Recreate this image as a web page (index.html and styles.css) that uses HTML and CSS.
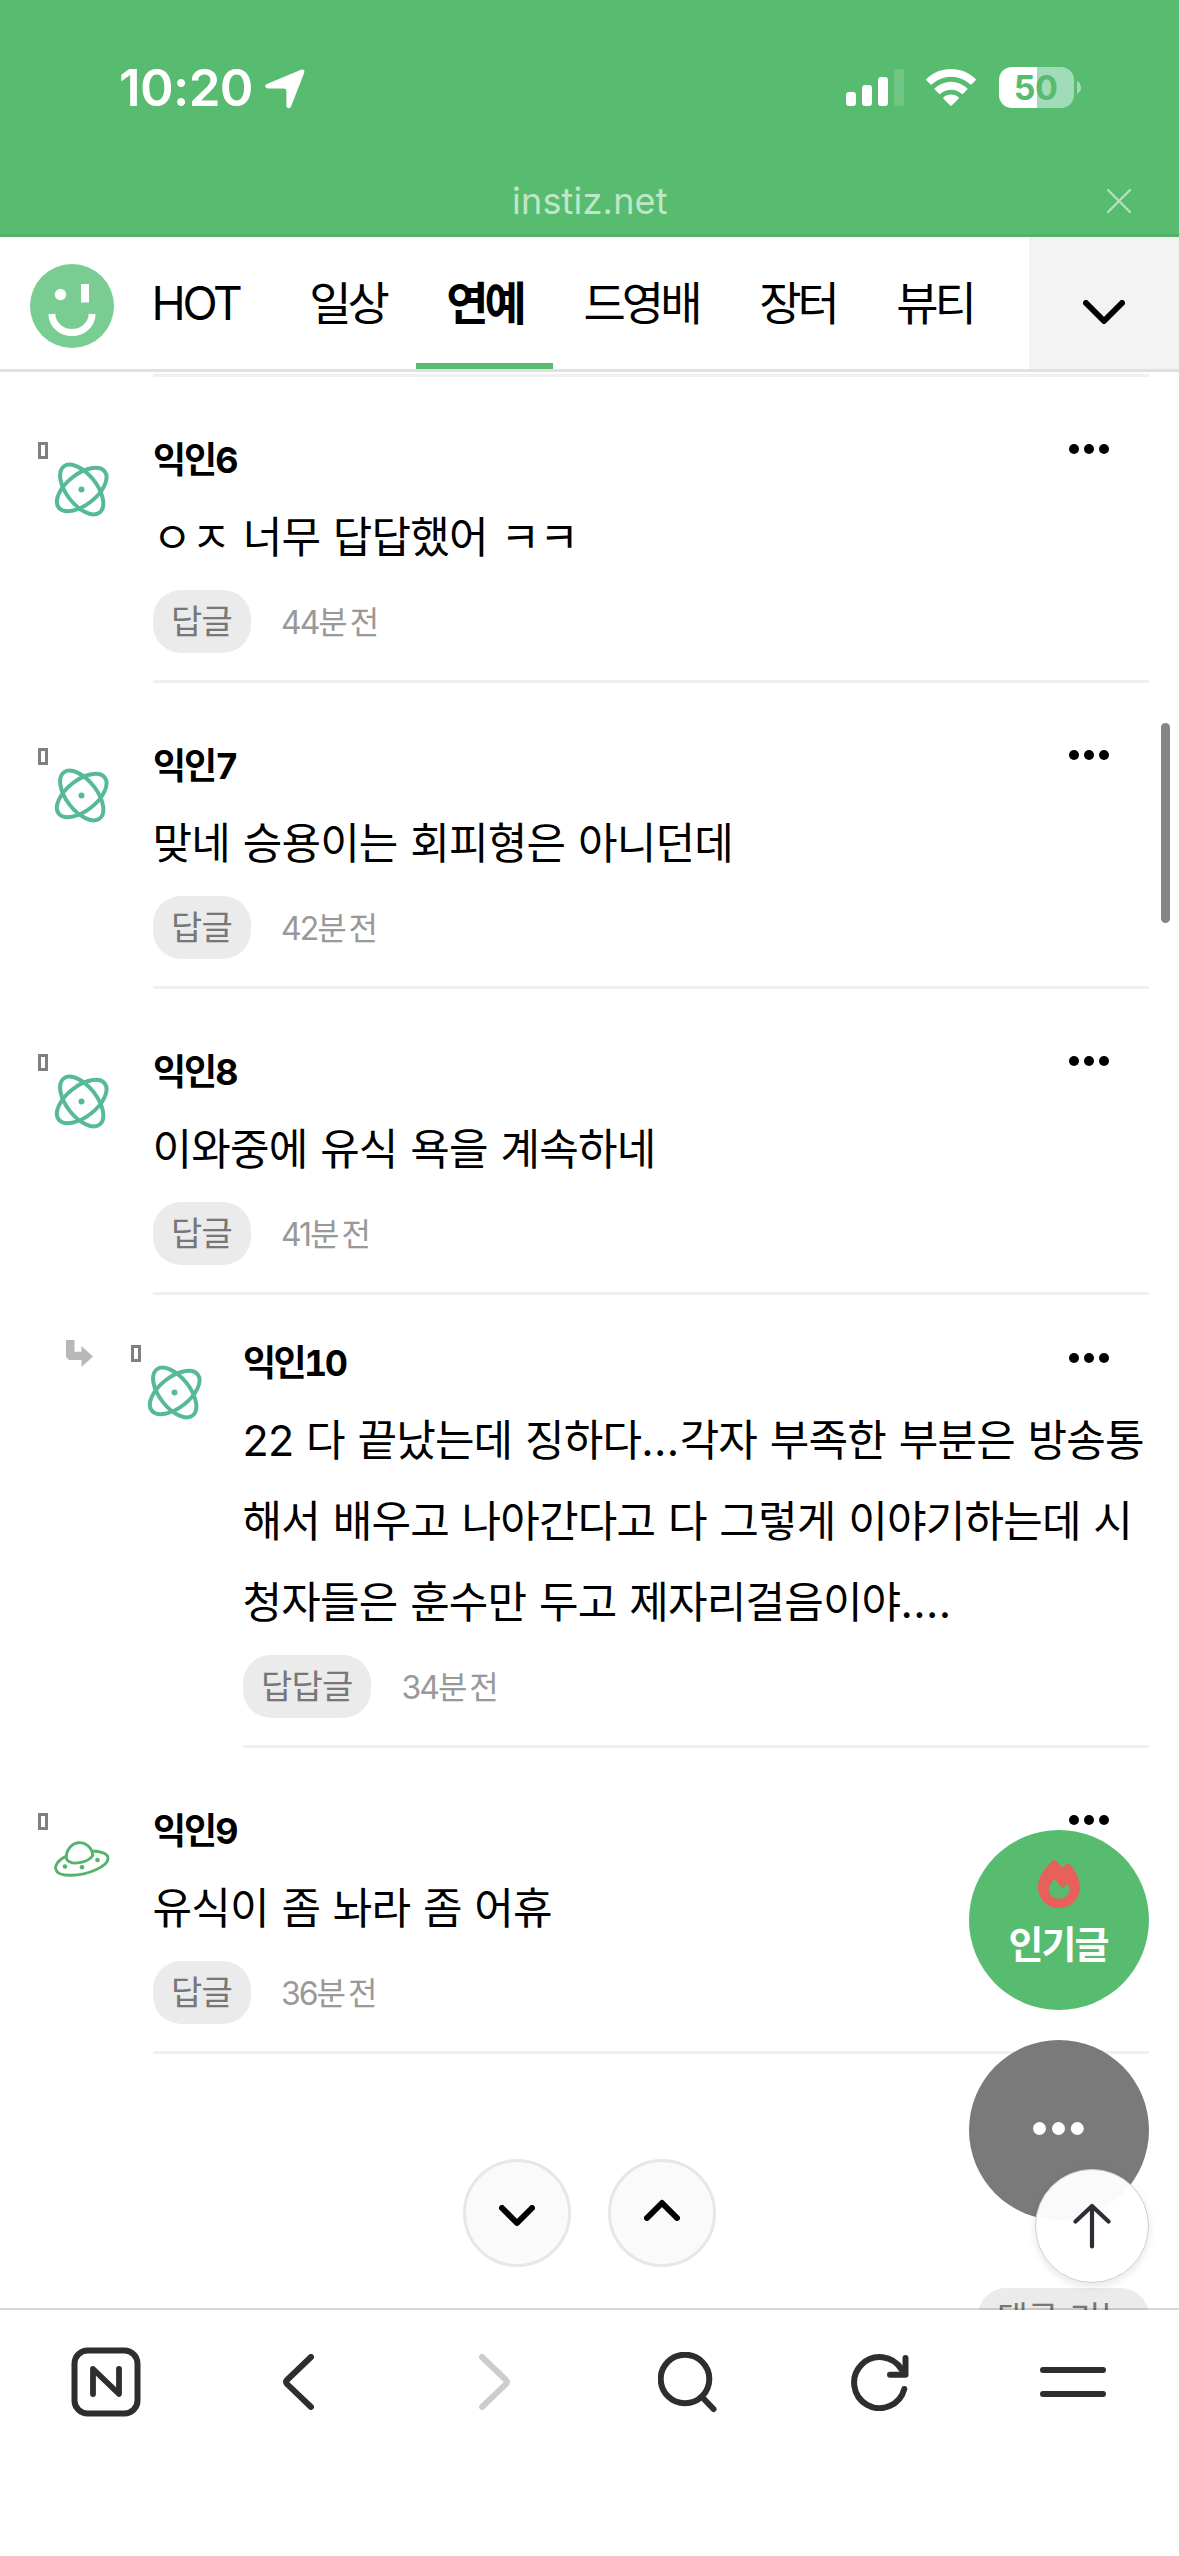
FILE: index.html
```html
<!DOCTYPE html>
<html lang="ko">
<head>
<meta charset="utf-8">
<title>인스티즈</title>
<link rel="stylesheet" href="styles.css">
</head>
<body>
<svg class="defs" width="0" height="0" aria-hidden="true">
  <symbol id="atom" viewBox="0 0 56 56">
    <g fill="none" stroke="#55b99a" stroke-width="4">
      <ellipse cx="27.7" cy="27.5" rx="29.2" ry="15.2" transform="rotate(52 27.7 27.5)"/>
      <ellipse cx="27.7" cy="27.5" rx="29.2" ry="15.2" transform="rotate(-38 27.7 27.5)"/>
    </g>
    <circle cx="27.5" cy="27.5" r="3" fill="#55b99a"/>
  </symbol>
  <symbol id="ufo" viewBox="0 0 56 56">
    <g fill="none" stroke="#55b36e" stroke-width="2.9" stroke-linejoin="round">
      <path d="M12.5 26C11.500 17.500 17 11 24 9.800C31 8.800 38 14 38.800 22.500C34 29.500 17 33.500 12.500 26Z"/>
      <path d="M12.500 23C4 27 .9 32.500 1.700 36C2.800 40.500 9 42.500 17 42.300C34 42 54 33.500 54 25.200C54 20.500 46 18.200 38.500 18"/>
    </g>
    <g fill="#55b36e"><circle cx="11" cy="33.500" r="2.300"/><circle cx="28" cy="34.300" r="2.300"/><circle cx="43.500" cy="27" r="2.300"/></g>
  </symbol>
  <symbol id="more" viewBox="0 0 40 10">
    <circle cx="5" cy="5" r="5"/><circle cx="20" cy="5" r="5"/><circle cx="35" cy="5" r="5"/>
  </symbol>
</svg>

<div class="screen">
  <header class="top">
    <div class="status">
      <div class="clock">10:20</div>
      <svg class="loc" viewBox="0 0 40 40"><path d="M36 .8C38.500 -.2 40 1.300 39.200 3.800L26 37.500C25 40 21.500 39.600 21.400 37V22.200C21.400 20.200 20.800 19.400 18.600 19.400H2.800C-.1 19.300 -.8 16 1.900 14.900Z" fill="#fff"/></svg>
      <svg class="signal" viewBox="0 0 58 38" fill="#fff"><rect x="0" y="23" width="10" height="14" rx="3"/><rect x="16" y="16" width="10" height="21" rx="3"/><rect x="32" y="8" width="10" height="29" rx="3"/><rect x="48" y="0" width="10" height="37" rx="3" opacity=".15"/></svg>
      <svg class="wifi" viewBox="0 0 50 38" fill="#fff"><path d="M25 0C34.500 0 43 3.700 49.600 9.900a1 1 0 0 1 0 1.400L45.600 15.300a1 1 0 0 1-1.400 0A28 28 0 0 0 5.800 15.300a1 1 0 0 1-1.400 0L.4 11.300a1 1 0 0 1 0-1.400C7 3.700 15.500 0 25 0Z"/><path d="M25 12.800C31 12.800 36.700 15.100 41.200 19.200a1 1 0 0 1 0 1.400L37 24.700a1 1 0 0 1-1.400 0A16 16 0 0 0 14.400 24.700a1 1 0 0 1-1.400 0L8.800 20.600a1 1 0 0 1 0-1.400C13.300 15.100 19 12.800 25 12.800Z"/><path d="M25 25.500C28 25.500 30.500 26.500 32.500 28.200a1 1 0 0 1 0 1.500L25.700 36.500a1 1 0 0 1-1.400 0L17.500 29.700a1 1 0 0 1 0-1.500C19.500 26.500 22 25.500 25 25.500Z"/></svg>
      <div class="battery">50</div>
      <svg class="nub" viewBox="0 0 4 13"><path d="M0 0Q4 2.500 4 6.500T0 13Z" fill="#a0dcb8"/></svg>
    </div>
    <div class="url">
      <span class="host">instiz.net</span>
      <svg class="close" viewBox="0 0 24 24"><path d="M1 1L23 23M23 1L1 23" stroke="#b4e0c1" stroke-width="2.400" stroke-linecap="round"/></svg>
    </div>
  </header>

  <nav class="nav">
    <svg class="logo" viewBox="0 0 84 84"><circle cx="42" cy="42" r="42" fill="#7acd92"/><circle cx="30.500" cy="30.500" r="5.700" fill="#fff"/><rect x="51" y="20" width="8" height="18.500" fill="#fff"/><path d="M21.800 50C22.500 61 31 68.500 42 68.500S61.500 61 62.200 50" fill="none" stroke="#fff" stroke-width="7"/></svg>
    <a class="tab tab-hot">HOT</a>
    <a class="tab">일상</a>
    <a class="tab tab-on">연예</a>
    <a class="tab tab-wide">드영배</a>
    <a class="tab">장터</a>
    <a class="tab">뷰티</a>
    <div class="expand"><svg viewBox="0 0 42 24" width="42" height="24"><path d="M3 3L21 21L39 3" fill="none" stroke="#000" stroke-width="6" stroke-linecap="round" stroke-linejoin="round"/></svg></div>
  </nav>

  <main class="list">
    <div class="rule"></div>
    <article class="comment">
      <div class="avatar"><i class="tofu"></i><svg class="icon"><use href="#atom"/></svg></div>
      <div class="body">
        <div class="head"><b class="name">익인6</b><svg class="more"><use href="#more"/></svg></div>
        <p class="text">ㅇㅈ 너무 답답했어 ㅋㅋ</p>
        <div class="foot"><span class="reply">답글</span><span class="time">44<span class="unit">분전</span></span></div>
      </div>
    </article>
    <article class="comment">
      <div class="avatar"><i class="tofu"></i><svg class="icon"><use href="#atom"/></svg></div>
      <div class="body">
        <div class="head"><b class="name">익인7</b><svg class="more"><use href="#more"/></svg></div>
        <p class="text">맞네 승용이는 회피형은 아니던데</p>
        <div class="foot"><span class="reply">답글</span><span class="time">42<span class="unit">분전</span></span></div>
      </div>
    </article>
    <article class="comment">
      <div class="avatar"><i class="tofu"></i><svg class="icon"><use href="#atom"/></svg></div>
      <div class="body">
        <div class="head"><b class="name">익인8</b><svg class="more"><use href="#more"/></svg></div>
        <p class="text">이와중에 유식 욕을 계속하네</p>
        <div class="foot"><span class="reply">답글</span><span class="time">41<span class="unit">분전</span></span></div>
      </div>
    </article>
    <article class="comment nested">
      <svg class="branch" viewBox="0 0 28 28"><path d="M0 0H8.500V11.700H15.500V6L27 16.500L15.500 27V20H3L0 17Z" fill="#b8b8b8"/></svg>
      <div class="avatar"><i class="tofu"></i><svg class="icon"><use href="#atom"/></svg></div>
      <div class="body">
        <div class="head"><b class="name">익인10</b><svg class="more"><use href="#more"/></svg></div>
        <p class="text">22 다 끝났는데 징하다<span class="dots">...</span>각자 부족한 부분은 방송통<br>해서 배우고 나아간다고 다 그렇게 이야기하는데 시<br>청자들은 훈수만 두고 제자리걸음이야<span class="dots">....</span></p>
        <div class="foot"><span class="reply">답답글</span><span class="time">34<span class="unit">분전</span></span></div>
      </div>
    </article>
    <article class="comment">
      <div class="avatar"><i class="tofu"></i><svg class="icon"><use href="#ufo"/></svg></div>
      <div class="body">
        <div class="head"><b class="name">익인9</b><svg class="more"><use href="#more"/></svg></div>
        <p class="text">유식이 좀 놔라 좀 어휴</p>
        <div class="foot"><span class="reply">답글</span><span class="time">36<span class="unit">분전</span></span></div>
      </div>
    </article>
    <div class="pager">
      <button class="round"><svg viewBox="0 0 36 22" width="36" height="22"><path d="M3 3L18 18L33 3"/></svg></button>
      <button class="round up"><svg viewBox="0 0 36 22" width="36" height="22"><path d="M3 19L18 4L33 19"/></svg></button>
    </div>
    <div class="tools"><span class="reply feature">댓글 기능</span></div>
  </main>

  <footer class="toolbar">
    <svg viewBox="0 0 70 70" width="70" height="70"><rect x="3.500" y="3.500" width="63" height="63" rx="13"/><path d="M22 47V22L48 47V22" stroke-width="5.800"/></svg>
    <svg class="back" viewBox="0 0 32 56" width="32" height="56"><path d="M29 3L5 26Q3 28 5 30L29 53"/></svg>
    <svg class="fwd" viewBox="0 0 32 56" width="32" height="56"><path d="M3 3L27 26Q29 28 27 30L3 53"/></svg>
    <svg class="find" viewBox="0 0 60 62" width="60" height="62"><circle cx="27" cy="27" r="24.300"/><path d="M45 46L55.500 57"/></svg>
    <svg class="reload" viewBox="0 0 58 58" width="58" height="58"><path d="M53.300 36A25.500 25.500 0 1 1 50.500 16.500M54.500 5V21.700H39"/></svg>
    <svg class="menu" viewBox="0 0 66 30" width="66" height="30"><path d="M3 3H63M3 27H63"/></svg>
  </footer>

  <div class="scrollbar"></div>
  <a class="fab hot"><svg viewBox="0 0 42 48" width="42" height="48"><path fill="#e8605a" fill-rule="evenodd" d="M14.500 .8Q16.500 -.8 18.500 1.300L24.700 8L28 4.500Q30 2.800 32 4.700C38 11 42 20 42 27C42 39 33 48 21 48S0 39 0 27C0 17 7.500 7.500 14.500 .8ZM16.500 19C13.500 22 11 25.500 11 29C11 35 15 38.800 21 38.800S31.500 35 31.500 29Q31.500 26.500 29.500 23.500L25.500 27.500Q24.500 28.300 23.500 27.300Z"/></svg><span>인기글</span></a>
  <a class="fab etc"><svg viewBox="0 0 51 13" width="51" height="13" fill="#fff"><circle cx="6.500" cy="6.500" r="6.500"/><circle cx="25.500" cy="6.500" r="6.500"/><circle cx="44.300" cy="6.500" r="6.500"/></svg></a>
  <a class="totop"><svg viewBox="0 0 38 46" width="38" height="46"><path d="M19 43.500V3M2.500 18.500L19 3L35.500 18.500" fill="none" stroke="#2d2d35" stroke-width="4.200" stroke-linecap="round" stroke-linejoin="round"/></svg></a>
</div>
</body>
</html>
```
FILE: styles.css
```css
* { box-sizing: border-box; }
body {
  margin: 0;
  background: #fff;
  color: #000;
  font-family: Inter, "Noto Sans CJK KR", sans-serif;
}
svg { display: block; flex: none; }
.defs { position: absolute; }
.screen {
  position: relative;
  width: 1179px;
  height: 2556px;
  overflow: hidden;
  display: flex;
  flex-direction: column;
}

.top { height: 237px; background: #58bc70; border-bottom: 3px solid #53b269; flex: none; }
.status { display: flex; align-items: flex-start; height: 171px; padding: 69px 0 0 119px; }
.clock {
  width: 146px;
  color: #fff;
  font-size: 51px;
  font-weight: 600;
  line-height: 38px;
  letter-spacing: -.6px;
  white-space: nowrap;
}
.loc { width: 40px; height: 40px; }
.signal { width: 58px; height: 38px; margin-left: 541px; }
.wifi { width: 50px; height: 38px; margin-left: 22px; }
.battery {
  width: 75px;
  height: 41px;
  margin: -2px 0 0 23px;
  padding-right: 2px;
  border-radius: 13px;
  background: linear-gradient(90deg, #fff 38px, #a0dcb8 38px);
  color: #58bc70;
  font-size: 34px;
  font-weight: 700;
  line-height: 41px;
  text-align: center;
  letter-spacing: -.5px;
}
.nub { width: 4px; height: 13px; margin: 12px 0 0 3px; }
.url { display: flex; justify-content: flex-end; align-items: center; height: 60px; padding-right: 48px; }
.host { width: 154px; margin-right: 441px; color: #c0e6ca; font-size: 36px; letter-spacing: .2px; white-space: nowrap; }
.close { width: 24px; height: 24px; }

.nav { display: flex; height: 135px; border-bottom: 3px solid #e0e0e0; padding-left: 30px; flex: none; }
.logo { width: 84px; height: 84px; margin: 27px 1px 0 0; }
.tab {
  width: 137px;
  height: 132px;
  display: flex;
  justify-content: center;
  font-size: 46px;
  line-height: 132px;
  letter-spacing: -4px;
  white-space: nowrap;
}
.tab-hot { width: 164px; padding-right: 3px; letter-spacing: -3.3px; }
.tab-on { font-weight: 700; border-bottom: 6px solid #58bc70; }
.tab-wide { width: 176px; }
.expand { width: 150px; margin-left: auto; background: #f3f3f3; display: flex; justify-content: center; padding-top: 63px; }

.list { height: 1938px; padding: 2px 30px 0 0; overflow: hidden; flex: none; }
.rule { height: 3px; margin-left: 153px; background: #f0f0f0; }
.comment { display: flex; }
.avatar { width: 153px; padding: 65px 0 0 38px; flex: none; display: flex; }
.tofu { width: 10px; height: 17px; border: 3px solid #808080; }
.icon { width: 56px; height: 56px; margin: 20px 0 0 6px; overflow: visible; }
.body { flex: 1; border-bottom: 3px solid #f0f0f0; padding: 61px 0 27px; }
.head { display: flex; justify-content: space-between; height: 44px; padding-right: 40px; }
.name { font-size: 36px; line-height: 44px; letter-spacing: -2px; font-variant-numeric: tabular-nums; }
.nested .name { letter-spacing: -2.6px; }
.more { width: 40px; height: 10px; margin-top: 6px; }
.text {
  margin: 15px 0 12px -.5px;
  font-size: 43px;
  line-height: 81px;
  letter-spacing: -.82px;
  word-spacing: 1.4px;
  white-space: nowrap;
}
.dots { letter-spacing: .4px; }
.foot { display: flex; gap: 31px; height: 63px; }
.reply {
  padding: 0 19px 0 18px;
  border-radius: 28px;
  background: #ebebeb;
  color: #777;
  font-size: 34px;
  line-height: 63px;
  letter-spacing: -.8px;
  white-space: nowrap;
}
.time { color: #999; font-size: 32px; line-height: 65px; letter-spacing: -2px; margin-left: -1px; }
.unit { letter-spacing: 2px; }

.nested .branch { width: 28px; height: 28px; margin: 45px 0 0 66px; }
.nested .avatar { width: 149px; padding: 50px 0 0 37px; }
.nested .body { padding-top: 46px; }
.nested .more { margin-top: 12px; }

.pager { display: flex; justify-content: center; gap: 37px; margin: 105px 0 0 30px; }
.round {
  width: 108px;
  height: 108px;
  padding: 0;
  border: 3px solid #e7e7e7;
  border-radius: 50%;
  background: #fafafa;
  display: flex;
  align-items: center;
  justify-content: center;
}
.round path { fill: none; stroke: #000; stroke-width: 6; stroke-linecap: round; stroke-linejoin: round; }
.round svg { margin: 5px 1px 0 0; }
.round.up svg { margin: -6px 0 0; }
.tools { display: flex; justify-content: flex-end; margin-top: 21px; }
.feature { height: 63px; padding: 0 19px; letter-spacing: -.9px; word-spacing: 3px; line-height: 61px; }

.toolbar {
  flex: 1;
  display: flex;
  align-items: flex-start;
  margin-top: -2px;
  padding: 37px 0 0 71px;
  border-top: 2px solid rgba(0, 0, 0, .15);
  background: #fff;
  background-clip: padding-box;
  z-index: 1;
}
.toolbar svg { fill: none; stroke: #2e2e2e; stroke-width: 6; stroke-linecap: round; stroke-linejoin: round; }
.toolbar .back { margin: 7px 0 0 141px; }
.toolbar .fwd { margin: 7px 0 0 165px; stroke: #ccc; }
.toolbar .find { margin: 5px 0 0 147px; }
.toolbar .reload { margin: 6px 0 0 133px; }
.toolbar .menu { margin: 20px 0 0 131px; }

.scrollbar { position: absolute; left: 1161px; top: 723px; width: 9px; height: 200px; border-radius: 5px; background: #858585; }
.fab {
  position: absolute;
  right: 30px;
  width: 180px;
  height: 180px;
  border-radius: 50%;
  display: flex;
  flex-direction: column;
  align-items: center;
}
.hot { top: 1830px; padding-top: 30px; background: #58bc70; color: #fff; font-size: 38px; font-weight: 600; letter-spacing: -2px; }
.hot span { margin: 10px 2px 0 0; line-height: 52px; }
.etc { top: 2040px; padding: 82px 2px 0 0; background: #7a7a7a; }
.totop {
  position: absolute;
  right: 30px;
  top: 2169px;
  width: 114px;
  height: 114px;
  padding-top: 33px;
  border: 1px solid #ccc;
  border-radius: 50%;
  background: rgba(255, 255, 255, .96);
  box-shadow: 0 3px 8px rgba(0, 0, 0, .1);
  display: flex;
  justify-content: center;
}
```
